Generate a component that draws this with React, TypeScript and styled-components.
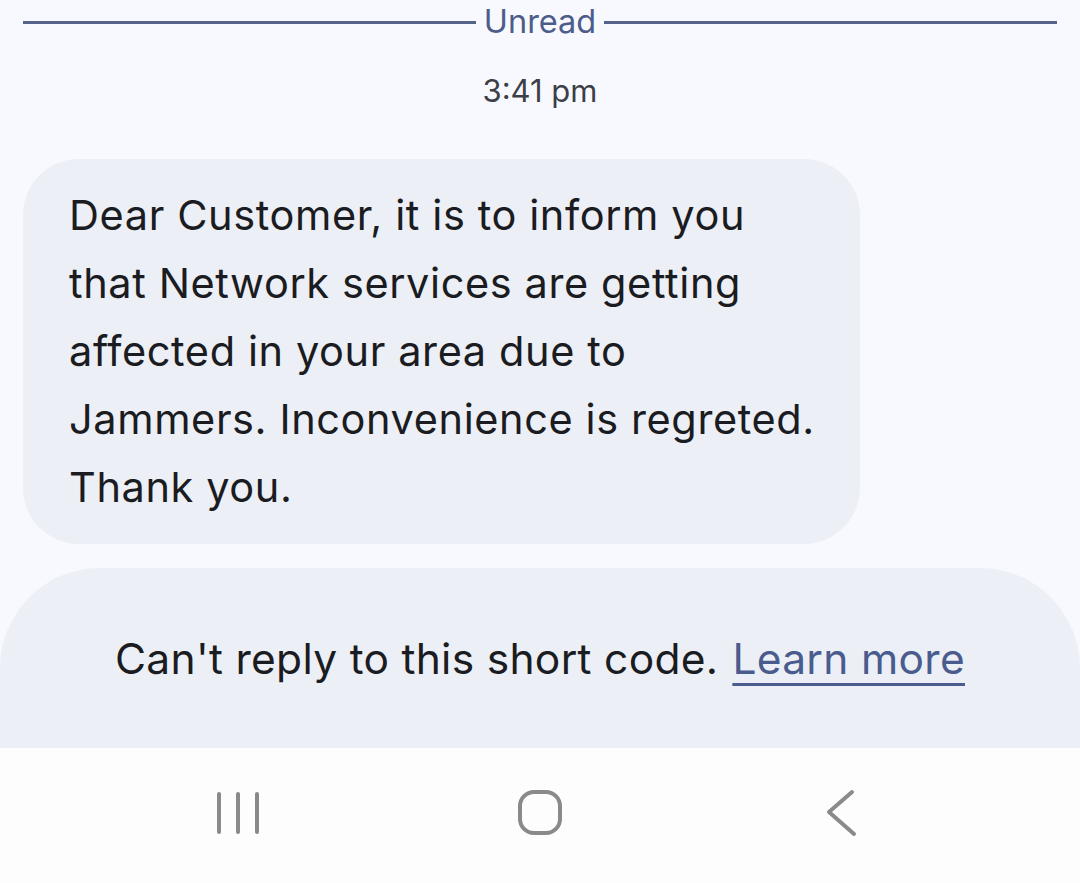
import React from "react";
import styled, { createGlobalStyle } from "styled-components";

const Global = createGlobalStyle`
  html, body { margin: 0; padding: 0; }
  body { background: #f8f9fe; font-family: Inter, "Noto Sans", sans-serif; }
`;

const Page = styled.div`
  width: 1080px;
  height: 883px;
  display: flex;
  flex-direction: column;
  background: #f8f9fe;
  overflow: hidden;
`;

const Divider = styled.div`
  display: flex;
  align-items: center;
  gap: 8px;
  padding: 0 23px;
  height: 44px;
`;

const Rule = styled.div`
  flex: 1;
  height: 3px;
  background: #56648a;
`;

const DividerLabel = styled.span`
  font-size: 32.5px;
  color: #4d5d8a;
  line-height: 44px;
`;

const Timestamp = styled.div`
  text-align: center;
  font-size: 31px;
  color: #3c3f46;
  margin-top: 26px;
  line-height: 42px;
`;

const Thread = styled.div`
  padding: 47px 23px 0;
`;

const Bubble = styled.div`
  width: 837px;
  box-sizing: border-box;
  background: #eceff6;
  border-radius: 56px;
  padding: 22px 46px 23px;
  font-size: 41.5px;
  letter-spacing: 0.6px;
  line-height: 68px;
  color: #1b1c21;
  white-space: nowrap;
`;

const Banner = styled.div`
  margin-top: 24px;
  height: 180px;
  background: #eceff6;
  border-radius: 100px 100px 0 0;
  display: flex;
  align-items: center;
  justify-content: center;
  font-size: 42.5px;
  letter-spacing: 0.3px;
  color: #1b1c21;
`;

const LearnMore = styled.a`
  color: #4a5b8e;
  text-decoration: underline;
  text-decoration-thickness: 3px;
  text-underline-offset: 9px;
  margin-left: 14px;
`;

const NavBar = styled.div`
  flex: 1;
  background: #fdfdfd;
  display: flex;
  align-items: center;
  justify-content: space-between;
  padding: 0 221px 6px 215px;
`;

const NavIcon = styled.svg<{ $shift?: number }>`
  display: block;
  margin-left: ${(p) => p.$shift ?? 0}px;
`;

const lines = [
  "Dear Customer, it is to inform you",
  "that Network services are getting",
  "affected in your area due to",
  "Jammers. Inconvenience is regreted.",
  "Thank you.",
];

export default function App() {
  return (
    <>
      <Global />
      <Page>
        <Divider>
          <Rule />
          <DividerLabel>Unread</DividerLabel>
          <Rule />
        </Divider>
        <Timestamp>3:41 pm</Timestamp>
        <Thread>
          <Bubble>
            {lines.map((l, i) => (
              <React.Fragment key={i}>
                {l}
                {i < lines.length - 1 && <br />}
              </React.Fragment>
            ))}
          </Bubble>
        </Thread>
        <Banner>
          Can't reply to this short code.<LearnMore>Learn more</LearnMore>
        </Banner>
        <NavBar>
          <NavIcon width="46" height="44" viewBox="0 0 46 44">
            <g stroke="#8a8a8a" strokeWidth="4" strokeLinecap="round">
              <line x1="4" y1="3" x2="4" y2="41" />
              <line x1="23" y1="3" x2="23" y2="41" />
              <line x1="42" y1="3" x2="42" y2="41" />
            </g>
          </NavIcon>
          <NavIcon width="48" height="48" viewBox="0 0 48 48" $shift={-6}>
            <rect x="4" y="3" width="40" height="41" rx="14" fill="none" stroke="#8a8a8a" strokeWidth="4" />
          </NavIcon>
          <NavIcon width="34" height="48" viewBox="0 0 34 48">
            <polyline points="27,3 4,23 29,45" fill="none" stroke="#8a8a8a" strokeWidth="4" strokeLinecap="round" strokeLinejoin="round" />
          </NavIcon>
        </NavBar>
      </Page>
    </>
  );
}
